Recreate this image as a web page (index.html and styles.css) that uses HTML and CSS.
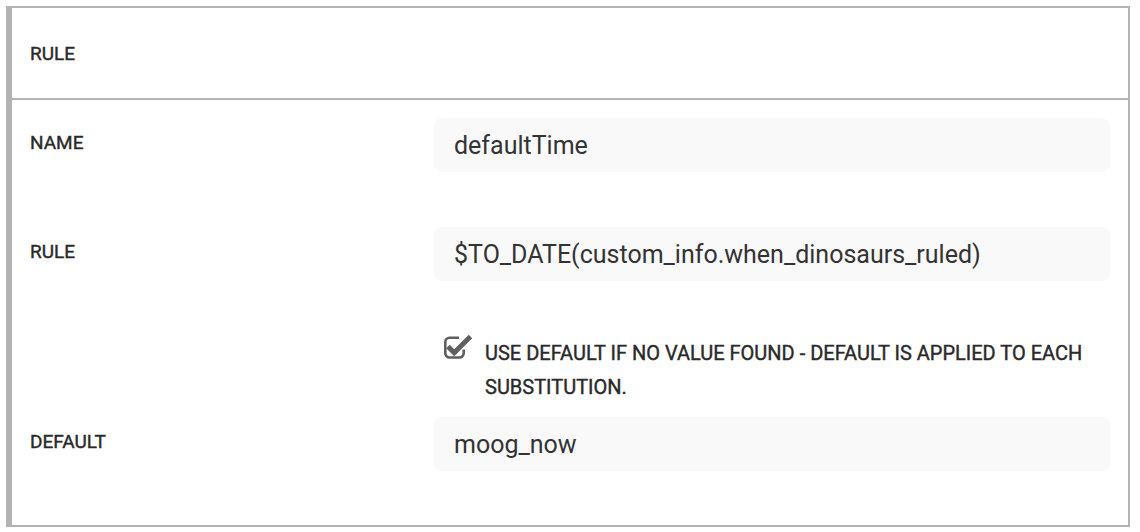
FILE: index.html
```html
<!DOCTYPE html>
<html lang="en">
  <head>
    <meta charset="UTF-8" />
    <title>Rule</title>
    <link rel="stylesheet" href="styles.css">
  </head>
  <body>
    <div class="panel">
      <div class="panel-head">RULE</div>
      <div class="panel-body">
        <div class="row">
          <div class="label">NAME</div>
          <div class="field">defaultTime</div>
        </div>
        <div class="row gap">
          <div class="label">RULE</div>
          <div class="field">$TO_DATE(custom_info.when_dinosaurs_ruled)</div>
        </div>
        <div class="check-row">
          <svg class="check" width="30" height="26" viewBox="0 0 30 26">
            <path d="M15 3.8 H5.5 A4.2 4.2 0 0 0 1.3 8 V19.3 A4.2 4.2 0 0 0 5.5 23.5 H15.5 A4.2 4.2 0 0 0 19.7 19.3 V15.5" fill="none" stroke="#5f5f5f" stroke-width="2.6"/>
            <polyline points="4,12.5 10.2,18.7 26.5,2.5" fill="none" stroke="#5f5f5f" stroke-width="5" stroke-linejoin="miter"/>
          </svg>
          <span class="check-text">USE DEFAULT IF NO VALUE FOUND - DEFAULT IS APPLIED TO EACH SUBSTITUTION.</span>
        </div>
        <div class="row last">
          <div class="label">DEFAULT</div>
          <div class="field">moog_now</div>
        </div>
      </div>
    </div>
  </body>
</html>
```

FILE: styles.css
```css
body {
  margin: 0;
  padding: 6px 10px 7px 6px;
  font-family: Roboto, "Liberation Sans", sans-serif;
  color: #333;
  background: #fff;
}

.panel {
  border: 2px solid #b3b3b3;
  border-left-width: 6px;
}

/* caps labels: regular weight thickened a little, reads like a medium weight */
.panel-head,
.label,
.check-text {
  font-weight: 400;
  color: #2a2a2a;
  -webkit-text-stroke: 0.4px #2a2a2a;
}

.panel-head {
  height: 90px;
  display: flex;
  align-items: center;
  padding-left: 18px;
  font-size: 19px;
  border-bottom: 2px solid #b3b3b3;
}

.panel-body {
  padding: 18px 18px 54px 18px;
}

.row {
  display: flex;
  align-items: center;
}
.row.gap {
  margin-top: 55px;
}
.row.last {
  margin-top: 13px;
}

.label {
  width: 404px;
  padding-bottom: 6px;
  font-size: 19px;
}

.field {
  flex: 1;
  height: 54px;
  display: flex;
  align-items: center;
  padding-left: 20px;
  background: #f9f9f9;
  border-radius: 8px;
  font-size: 25px;
  color: #333;
}

.check-row {
  margin-top: 55px;
  margin-left: 404px;
  display: flex;
  align-items: flex-start;
}

.check {
  margin-top: -2px;
  margin-left: 10px;
  flex: none;
}

.check-text {
  margin-left: 11px;
  width: 640px;
  font-size: 20px;
  line-height: 34px;
}
```
